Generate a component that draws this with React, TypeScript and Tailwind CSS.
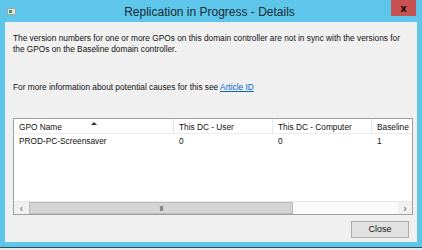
import React from 'react';

const columns = [
    { label: 'GPO Name', width: 'w-[160px]' },
    { label: 'This DC - User', width: 'w-[99px]' },
    { label: 'This DC - Computer', width: 'w-[99px]' },
    { label: 'Baseline', width: 'w-[60px]' },
];

const rows = [['PROD-PC-Screensaver', '0', '0', '1']];

export default function App() {
    return (
        <div className="w-[422px] h-[250px] overflow-hidden bg-[#5ec6ea] flex flex-col font-['Liberation_Sans',Arial,sans-serif] text-[#111]">
            {/* title bar */}
            <div className="h-[22px] flex items-start relative shrink-0">
                <div className="mt-[8px] ml-[7px] w-[9px] h-[7px] bg-[#d9e4dc] border border-[#9aa8a0] flex items-center">
                    <div className="ml-[1px] w-[3px] h-[3px] bg-[#3f9b57]" />
                </div>
                <div className="flex-1 text-center text-[12px] leading-[12px] mt-[6px] text-[#1b2a33] pl-[12px]">
                    Replication in Progress - Details
                </div>
                <div className="w-[25px] h-[16px] mr-[6px] bg-[#c75050] flex items-center justify-center text-[11px] font-bold text-black leading-none">
                    x
                </div>
            </div>

            {/* client area */}
            <div className="mx-[5px] h-[220px] shrink-0 bg-[#f0f0f0] px-[8px] pt-[11px] text-[8.3px] leading-[11px] flex flex-col">
                <p>
                    The version numbers for one or more GPOs on this domain controller are not in sync with the versions for the GPOs on the Baseline domain controller.
                </p>
                <p className="mt-[27px]">
                    For more information about potential causes for this see{' '}
                    <span className="text-[#0066cc] underline">Article ID</span>
                </p>

                {/* list view */}
                <div className="mt-[25px] h-[97px] w-[400px] border border-[#a0a0a0] bg-white flex flex-col">
                    <div className="h-[15px] flex border-b border-[#ececec]">
                        {columns.map((col, i) => (
                            <div key={i} className={`${col.width} shrink-0 h-full pl-[5px] pt-[2px] flex items-center relative ${i < 3 ? 'border-r border-[#e5e5e5]' : ''}`}>
                                {col.label}
                                {i === 0 && (
                                    <span className="absolute left-[77px] top-[3px] w-0 h-0 border-l-[3px] border-r-[3px] border-b-[3px] border-l-transparent border-r-transparent border-b-[#333]" />
                                )}
                            </div>
                        ))}
                    </div>
                    <div className="flex-1">
                        {rows.map((row, r) => (
                            <div key={r} className="flex h-[14px] items-center">
                                {row.map((cell, i) => (
                                    <div key={i} className={`${columns[i].width} shrink-0 pl-[5px]`}>{cell}</div>
                                ))}
                            </div>
                        ))}
                    </div>
                    {/* horizontal scrollbar */}
                    <div className="h-[13px] flex bg-[#f0f0f0] border-t border-[#e8e8e8]">
                        <div className="w-[15px] flex items-center justify-center text-[10px] text-[#606060]">&lsaquo;</div>
                        <div className="w-[264px] bg-[#d4d4d4] border border-[#bcbcbc] flex items-center justify-center">
                            <span className="text-[7px] leading-none tracking-[-1px] text-[#555]">III</span>
                        </div>
                        <div className="flex-1 bg-[#fafafa]" />
                        <div className="w-[14px] flex items-center justify-center text-[10px] text-[#606060]">&rsaquo;</div>
                    </div>
                </div>

                <div className="flex justify-end mt-[6px]">
                    <button className="w-[58px] h-[17px] bg-[#e1e1e1] border border-[#adadad] text-[9px] leading-none">
                        Close
                    </button>
                </div>
            </div>

            <div className="h-[5px] shrink-0" />
            <div className="h-[1px] bg-[#3b4a55] shrink-0" />
            <div className="flex-1 bg-[#e8e8e8]" />
        </div>
    );
}
